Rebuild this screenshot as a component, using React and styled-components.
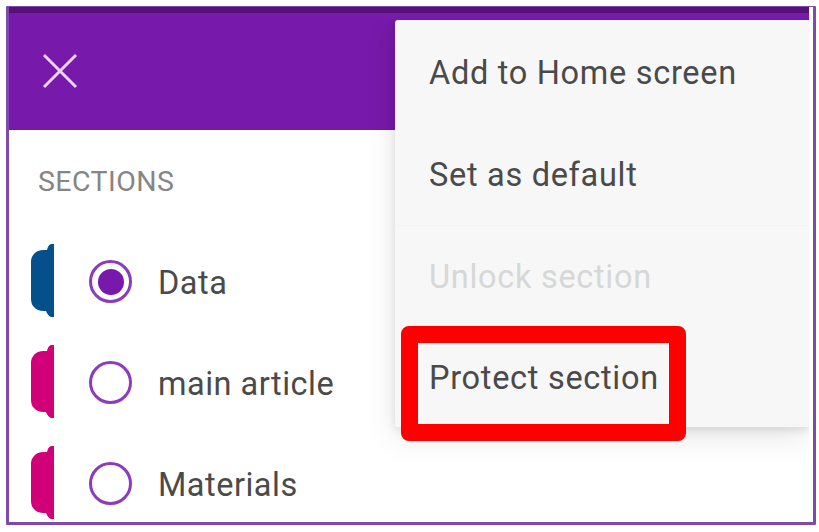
import React from "react";
import styled, { createGlobalStyle } from "styled-components";

const GlobalStyle = createGlobalStyle`
  * { box-sizing: border-box; }
  body { margin: 0; background: #fff; font-family: Roboto, "Liberation Sans", sans-serif; }
`;

const Page = styled.div`
  width: 819px;
  height: 532px;
  padding: 6px 3px 7px 6px;
  overflow: hidden;
`;

const Frame = styled.main`
  position: relative;
  height: 519px;
  border: 3px solid #7d4bad;
  border-top: 1px solid #7d4bad;
  border-radius: 1px;
  background: #fff;
`;

const Header = styled.header`
  width: 800px;
  height: 123px;
  border-top: 6px solid #581078;
  background: #7719aa;
  display: flex;
  align-items: center;
  padding-left: 33px;
`;

const CloseIcon = styled.svg`
  width: 36px;
  height: 36px;
  margin-top: -1px;
  stroke: #ecd3f5;
  stroke-width: 3;
`;

const SectionsTitle = styled.h2`
  margin: 0;
  height: 101px;
  padding-left: 29px;
  font-size: 28.5px;
  font-weight: 400;
  line-height: 104px;
  color: #858585;
  letter-spacing: 0.45px;
`;

const SectionRow = styled.label`
  height: 101px;
  display: flex;
  align-items: center;
  padding-left: 22px;
`;

const SectionTab = styled.svg`
  width: 23px;
  height: 73px;
  margin-bottom: 2px;
  fill: ${(p) => p.$color};
`;

const Radio = styled.span`
  width: 43px;
  height: 43px;
  margin-left: 35px;
  border: 3px solid #8b3bbb;
  border-radius: 50%;
  display: flex;
  align-items: center;
  justify-content: center;

  &::after {
    content: "";
    width: 26px;
    height: 26px;
    border-radius: 50%;
    background: ${(p) => (p.$checked ? "#7719aa" : "transparent")};
  }
`;

const SectionName = styled.span`
  margin-left: 26px;
  padding-top: 2px;
  font-size: 32.5px;
  line-height: 40px;
  color: #4a4a4a;
  white-space: nowrap;
  letter-spacing: 0.5px;
`;

const MenuClip = styled.div`
  position: absolute;
  top: 13px;
  left: 346px;
  width: 454px;
  height: 490px;
  padding-left: 40px;
  overflow: hidden;
`;

const Menu = styled.ul`
  margin: 0;
  padding: 1px 0 0;
  height: 407px;
  list-style: none;
  border-radius: 3px 0 0 3px;
  background: #f7f7f7;
  box-shadow: 0 10px 32px rgba(0, 0, 0, 0.1), 0 3px 8px rgba(0, 0, 0, 0.1);
`;

const MenuItem = styled.li`
  position: relative;
  height: ${(p) => (p.$divided ? 101 : 102)}px;
  padding-left: 34px;
  font-size: 32.5px;
  line-height: ${(p) => (p.$divided ? 102 : 104)}px;
  white-space: nowrap;
  color: ${(p) => (p.$disabled ? "#d6d8d8" : "#4a4a4a")};
  letter-spacing: 0.7px;
  border-top: ${(p) => (p.$divided ? "1px solid #f4f2f3" : "0")};
`;

const Highlight = styled.span`
  position: absolute;
  left: 6px;
  top: 0;
  width: 285px;
  height: 115px;
  border-radius: 8px;
  border: 17px solid #ff0000;
`;

const sections = [
  { name: "Data", color: "#03508b", checked: true },
  { name: "main article", color: "#d10079" },
  { name: "Materials", color: "#d10079" },
];

const menuItems = [
  { label: "Add to Home screen" },
  { label: "Set as default" },
  { label: "Unlock section", disabled: true, divided: true },
  { label: "Protect section", highlighted: true },
];

export default function App() {
  return (
    <>
      <GlobalStyle />
      <Page>
        <Frame>
          <Header>
            <CloseIcon viewBox="0 0 36 36" aria-label="Close">
              <path d="M2 2 34 34M34 2 2 34" />
            </CloseIcon>
          </Header>
          <SectionsTitle>SECTIONS</SectionsTitle>
          {sections.map((s) => (
            <SectionRow key={s.name}>
              <SectionTab viewBox="0 0 23 73" $color={s.color}>
                <path d="M23 0H20Q17 1 16 6H13Q6 6 3 10Q0 13 0 18V55Q0 60 3 63Q6 67 13 67H15Q17 72 20 73H23Z" />
              </SectionTab>
              <Radio $checked={s.checked} />
              <SectionName>{s.name}</SectionName>
            </SectionRow>
          ))}
          <MenuClip>
            <Menu>
              {menuItems.map((m) => (
                <MenuItem key={m.label} $disabled={m.disabled} $divided={m.divided}>
                  {m.label}
                  {m.highlighted && <Highlight />}
                </MenuItem>
              ))}
            </Menu>
          </MenuClip>
        </Frame>
      </Page>
    </>
  );
}
